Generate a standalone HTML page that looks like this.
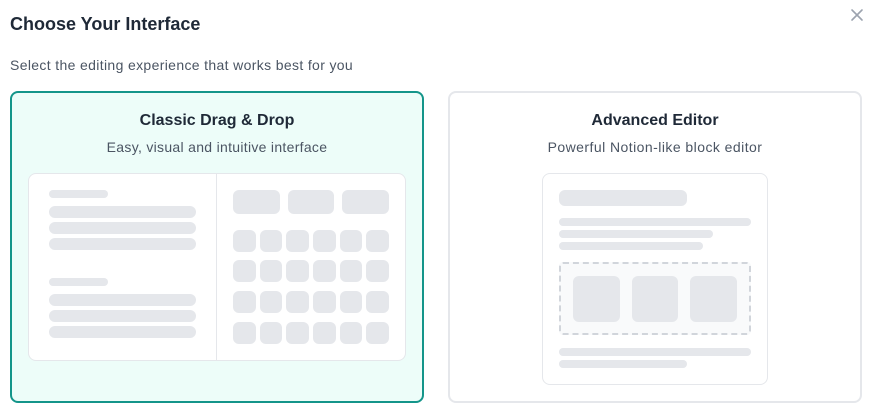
<!DOCTYPE html>
<html><head><style>
*{margin:0;padding:0;box-sizing:border-box}
body{width:873px;height:415px;background:#fff;font-family:"Liberation Sans",sans-serif;position:relative;overflow:hidden}
.a{position:absolute}
.g{position:absolute;background:#e5e7eb;border-radius:6px}
.t{position:absolute;width:100%;text-align:center}
</style></head><body>
<div class="a" style="left:10px;top:14px;font-size:18px;font-weight:bold;color:#1f2937">Choose Your Interface</div>
<div class="a" style="left:10px;top:57px;font-size:14px;letter-spacing:0.35px;color:#4b5563">Select the editing experience that works best for you</div>
<svg class="a" style="left:850px;top:8px" width="14" height="14" viewBox="0 0 14 14"><path d="M2 2L12 12M12 2L2 12" stroke="#9ca3af" stroke-width="1.6" stroke-linecap="round"/></svg>

<div class="a" style="left:10px;top:91px;width:414px;height:312px;border:2px solid #14958a;border-radius:8px;background:#edfdf9">
 <div class="t" style="top:19px;font-size:16px;font-weight:bold;color:#1f2937">Classic Drag &amp; Drop</div>
 <div class="t" style="top:46px;font-size:14px;letter-spacing:0.3px;color:#4b5563">Easy, visual and intuitive interface</div>
</div>
<div class="a" style="left:28px;top:173px;width:378px;height:188px;background:#fff;border:1px solid #e5e7eb;border-radius:8px"></div>
<div class="a" style="left:216px;top:174px;width:1px;height:186px;background:#e5e7eb"></div>
<div class="g" style="left:49px;top:190px;width:59px;height:8px;border-radius:4px"></div>
<div class="g" style="left:49px;top:206px;width:147px;height:12px"></div>
<div class="g" style="left:49px;top:222px;width:147px;height:12px"></div>
<div class="g" style="left:49px;top:238px;width:147px;height:12px"></div>
<div class="g" style="left:49px;top:278px;width:59px;height:8px;border-radius:4px"></div>
<div class="g" style="left:49px;top:294px;width:147px;height:12px"></div>
<div class="g" style="left:49px;top:310px;width:147px;height:12px"></div>
<div class="g" style="left:49px;top:326px;width:147px;height:12px"></div>
<div class="g" style="left:233px;top:190px;width:47px;height:24px"></div>
<div class="g" style="left:288px;top:190px;width:46px;height:24px"></div>
<div class="g" style="left:342px;top:190px;width:47px;height:24px"></div>

<div class="a" style="left:448px;top:91px;width:414px;height:312px;border:2px solid #e5e7eb;border-radius:8px;background:#fff">
 <div class="t" style="top:19px;font-size:16px;font-weight:bold;color:#1f2937">Advanced Editor</div>
 <div class="t" style="top:46px;font-size:14px;letter-spacing:0.45px;color:#4b5563">Powerful Notion-like block editor</div>
</div>
<div class="a" style="left:542px;top:173px;width:226px;height:212px;background:#fff;border:1px solid #e5e7eb;border-radius:8px"></div>
<div class="g" style="left:559px;top:190px;width:128px;height:16px"></div>
<div class="g" style="left:559px;top:218px;width:192px;height:8px;border-radius:4px"></div>
<div class="g" style="left:559px;top:230px;width:154px;height:8px;border-radius:4px"></div>
<div class="g" style="left:559px;top:242px;width:144px;height:8px;border-radius:4px"></div>
<div class="a" style="left:559px;top:262px;width:192px;height:73px;border:2px dashed #d1d5db;border-radius:4px;background:#f9fafb"></div>
<div class="g" style="left:573px;top:276px;width:47px;height:46px"></div>
<div class="g" style="left:632px;top:276px;width:46px;height:46px"></div>
<div class="g" style="left:690px;top:276px;width:47px;height:46px"></div>
<div class="g" style="left:559px;top:348px;width:192px;height:8px;border-radius:4px"></div>
<div class="g" style="left:559px;top:360px;width:128px;height:8px;border-radius:4px"></div>

<div class="g" style="left:233px;top:230px;width:23px;height:22px"></div><div class="g" style="left:260px;top:230px;width:22px;height:22px"></div><div class="g" style="left:286px;top:230px;width:23px;height:22px"></div><div class="g" style="left:313px;top:230px;width:23px;height:22px"></div><div class="g" style="left:340px;top:230px;width:22px;height:22px"></div><div class="g" style="left:366px;top:230px;width:23px;height:22px"></div>
<div class="g" style="left:233px;top:260px;width:23px;height:22px"></div><div class="g" style="left:260px;top:260px;width:22px;height:22px"></div><div class="g" style="left:286px;top:260px;width:23px;height:22px"></div><div class="g" style="left:313px;top:260px;width:23px;height:22px"></div><div class="g" style="left:340px;top:260px;width:22px;height:22px"></div><div class="g" style="left:366px;top:260px;width:23px;height:22px"></div>
<div class="g" style="left:233px;top:291px;width:23px;height:22px"></div><div class="g" style="left:260px;top:291px;width:22px;height:22px"></div><div class="g" style="left:286px;top:291px;width:23px;height:22px"></div><div class="g" style="left:313px;top:291px;width:23px;height:22px"></div><div class="g" style="left:340px;top:291px;width:22px;height:22px"></div><div class="g" style="left:366px;top:291px;width:23px;height:22px"></div>
<div class="g" style="left:233px;top:322px;width:23px;height:22px"></div><div class="g" style="left:260px;top:322px;width:22px;height:22px"></div><div class="g" style="left:286px;top:322px;width:23px;height:22px"></div><div class="g" style="left:313px;top:322px;width:23px;height:22px"></div><div class="g" style="left:340px;top:322px;width:22px;height:22px"></div><div class="g" style="left:366px;top:322px;width:23px;height:22px"></div>
</body></html>
